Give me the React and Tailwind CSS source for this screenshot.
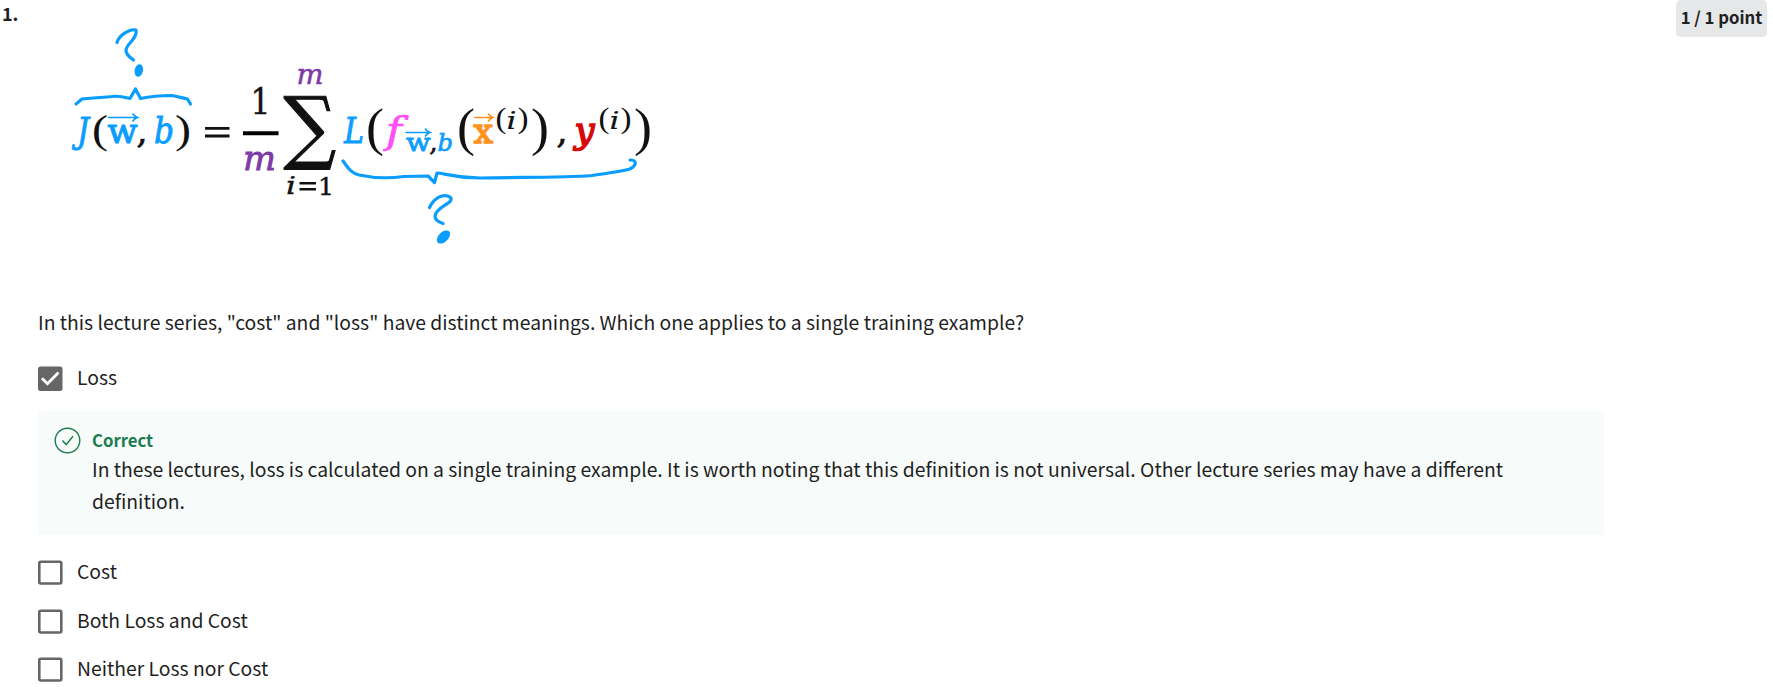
import React from "react";

const BLUE = "#0b9dfd";
const PURPLE = "#7f3aa8";
const INK = "#111111";

// One symbol of the formula: left edge, baseline, size, advance width, extra weight.
function Sym({ x, y, size, w, fill = INK, italic, weight = 0.4, family = "DejaVu Serif", children }) {
  return (
    <text
      x={x}
      y={y}
      fontSize={size}
      fill={fill}
      stroke={fill}
      strokeWidth={weight}
      textLength={w}
      lengthAdjust="spacingAndGlyphs"
      fontStyle={italic ? "italic" : "normal"}
      fontFamily={`"${family}", serif`}
    >
      {children}
    </text>
  );
}

function Paren({ x, y, size, w, children }) {
  return (
    <Sym x={x} y={y} size={size} w={w} weight={0} family="Liberation Serif">
      {children}
    </Sym>
  );
}

function Arrow({ x1, x2, y, color }) {
  return (
    <path
      d={`M${x1} ${y}H${x2}M${x2 - 5} ${y - 4}Q${x2 - 3} ${y - 1} ${x2} ${y}Q${x2 - 3} ${y + 1} ${x2 - 5} ${y + 4}`}
      fill="none"
      stroke={color}
      strokeWidth="1.5"
    />
  );
}

function Formula() {
  return (
    <svg className="block h-[300px] w-[640px]" viewBox="38 0 640 300">
      <g fill="none" stroke={BLUE} strokeWidth="3.2" strokeLinecap="round" strokeLinejoin="round">
        <path d="M117 42.5C119 35 130 28.500 136 30C138 38 126.500 44 126 50C125.800 54 129 57 133.500 60" />
        <path d="M76 104L82 99C96 98 104 97 112 96.500C120 95.500 124 97 130 98.500L135.500 89L140.500 98.500C152 96 162 95.500 172 95.500C178 97 184 98 187.500 99L190.500 104" />
        <path d="M343 161C347 166 350 173 359 175C377 179 392 178 404 176.500L428 176L434.500 182.500L437 173C444 173 454 178 480 178C520 177 560 178 592 175.500C610 173 622 171 630 169C637 165 637 160 630 160" />
        <path d="M429.500 207.500C434 198 443 193 450 197C456 203 436 206 435 216C435 220 438 222 443 223.500" />
      </g>
      <ellipse cx="138.800" cy="70.500" rx="4.200" ry="6.300" fill={BLUE} transform="rotate(12 138.8 70.500)" />
      <ellipse cx="443.500" cy="237" rx="4.800" ry="8" fill={BLUE} transform="rotate(45 443.5 237)" />

      <Sym x={77} y={143} size={36} w={12} fill={BLUE} italic weight={0.9}>J</Sym>
      <Paren x={92} y={142.5} size={41} w={16}>(</Paren>
      <Sym x={107.500} y={142.500} size={33} w={30} fill={BLUE} weight={1.100}>w</Sym>
      <Arrow x1={108} x2={137.5} y={117.5} color={BLUE} />
      <Sym x={136} y={143} size={36} w={12}>,</Sym>
      <Sym x={154} y={143} size={35} w={20} fill={BLUE} italic weight={0.9}>b</Sym>
      <Paren x={175} y={142.5} size={41} w={16}>)</Paren>
      <path d="M205 128.300H229.500M205 136H229.500" stroke={INK} strokeWidth="2.800" />

      <Sym x={250.500} y={113.500} size={36} w={20}>1</Sym>
      <path d="M243 133.300H278.500" stroke="#000" strokeWidth="4" />
      <Sym x={243} y={169.500} size={34} w={33} fill={PURPLE} italic weight={0.8}>m</Sym>
      <Sym x={296.500} y={84} size={27} w={27} fill={PURPLE} italic weight={0.5}>m</Sym>
      <Sym x={283.500} y={153.500} size={80} w={52.500} weight={1.200}>∑</Sym>
      <Sym x={286} y={194} size={25} w={10} italic>i</Sym>
      <path d="M299.500 183.300H316M299.500 189.300H316" stroke={INK} strokeWidth="2.400" />
      <Sym x={318} y={194.500} size={25} w={16}>1</Sym>

      <Sym x={344} y={143} size={36} w={20} fill={BLUE} italic weight={0.9}>L</Sym>
      <Paren x={366} y={145} size={53} w={18}>(</Paren>
      <Sym x={386} y={143} size={37} w={16} fill="#ff4df8" italic weight={0.700}>f</Sym>
      <Sym x={406} y={150.500} size={24} w={24.500} fill={BLUE} weight={0.800}>w</Sym>
      <Arrow x1={405.500} x2={430} y={132.500} color={BLUE} />
      <Sym x={429} y={151} size={26} w={9}>,</Sym>
      <Sym x={437.500} y={151} size={24} w={15.500} fill={BLUE} italic weight={0.700}>b</Sym>
      <Paren x={457} y={145} size={53} w={18}>(</Paren>
      <Sym x={473.500} y={142.500} size={34} w={19.500} fill="#ff921e" weight={1.500}>x</Sym>
      <Arrow x1={474} x2={493} y={117.500} color="#ff921e" />
      <Paren x={495.500} y={128} size={29} w={11}>(</Paren>
      <Sym x={506.500} y={128.500} size={24} w={10} italic weight={0.2}>i</Sym>
      <Paren x={517.500} y={128} size={29} w={11}>)</Paren>
      <Paren x={531} y={145} size={53} w={18}>)</Paren>
      <Sym x={556} y={143} size={36} w={12}>,</Sym>
      <Sym x={574.500} y={143} size={35} w={20} fill="#d80808" italic weight={1.6}>y</Sym>
      <Paren x={598.500} y={128} size={29} w={11}>(</Paren>
      <Sym x={609.500} y={128.500} size={24} w={10} italic weight={0.2}>i</Sym>
      <Paren x={620.500} y={128} size={29} w={11}>)</Paren>
      <Paren x={634} y={145} size={53} w={18}>)</Paren>
    </svg>
  );
}

function Checkbox({ checked }) {
  return (
    <svg className="h-[25px] w-[25px] shrink-0" viewBox="0 0 25 25" fill="none">
      {checked ? (
        <>
          <rect x="0" y="0.500" width="24.500" height="24.500" rx="2.500" fill="#666666" />
          <path d="M4 12.200L9.400 17.800L20.500 6.600" stroke="#fff" strokeWidth="2.800" />
        </>
      ) : (
        <rect x="1.300" y="1.800" width="22" height="21.700" rx="1.500" stroke="#666666" strokeWidth="2.600" />
      )}
    </svg>
  );
}

function Option({ label, checked }) {
  return (
    <label className="flex h-8 items-center gap-[14px]">
      <Checkbox checked={checked} />
      <span className="pb-[2px]">{label}</span>
    </label>
  );
}

export default function App() {
  return (
    <main className="flex h-[687px] w-[1773px] overflow-hidden bg-white font-['Noto_Sans_CJK_SC','Noto_Sans',sans-serif] text-[19.34px] leading-8 text-[#1f1f1f]">
      <div className="w-[38px] shrink-0 pl-[2px] text-[18px] leading-[26px] font-bold">1.</div>
      <section className="w-[1566px] shrink-0">
        <Formula />
        <p className="mt-[6px]">
          In this lecture series, "cost" and "loss" have distinct meanings. Which one applies to a single training example?
        </p>
        <div className="mt-[24px]">
          <Option label="Loss" checked />
        </div>
        <div className="mt-[17px] flex h-[124px] bg-[#f7fbfa] pl-[16px]">
          <svg className="mt-[16px] h-[27px] w-[27px] shrink-0" viewBox="0 0 27 27" fill="none" stroke="#1d7c50">
            <circle cx="13.500" cy="13.500" r="12.300" strokeWidth="1.400" />
            <path d="M8.400 13.600L12.200 17.600L19 9.200" strokeWidth="1.500" />
          </svg>
          <div className="ml-[11px] pt-[17px]">
            <div className="mb-px text-[16.7px] leading-6 font-bold text-[#1d7c50]">Correct</div>
            <p className="w-[1450px]">
              In these lectures, loss is calculated on a single training example. It is worth noting that this definition is not universal. Other lecture series may have a different definition.
            </p>
          </div>
        </div>
        <div className="mt-[21px] flex flex-col">
          <Option label="Cost" />
          <div className="mt-[17px]">
            <Option label="Both Loss and Cost" />
          </div>
          <div className="mt-[16px]">
            <Option label="Neither Loss nor Cost" />
          </div>
        </div>
      </section>
      <div className="ml-[72px] flex h-[37px] w-[91px] shrink-0 items-center justify-center rounded-[5px] bg-[#e5e7e8] pb-[3px] text-[16.7px] font-bold whitespace-nowrap">
        1 / 1 point
      </div>
    </main>
  );
}
